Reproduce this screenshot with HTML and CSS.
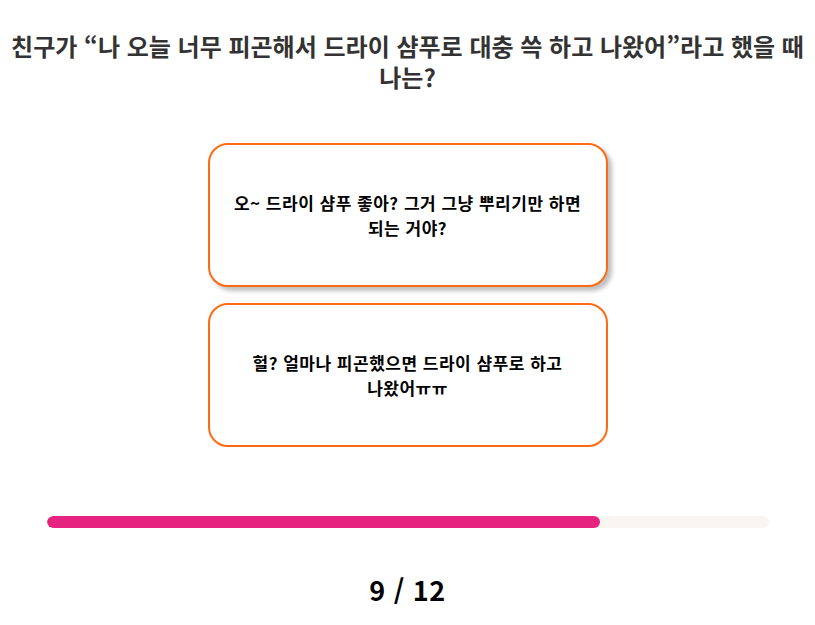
FILE: index.html
```html
<!DOCTYPE html>
<html lang="ko">
<head>
    <meta charset="UTF-8">
    <meta name="viewport" content="width=device-width, initial-scale=1.0">
    <title>Quiz</title>
    <link rel="stylesheet" href="styles.css">
</head>
<body>
    <div class="quiz">
        <h1 class="question">친구가 “나 오늘 너무 피곤해서 드라이 샴푸로 대충 쓱 하고 나왔어”라고 했을 때 나는?</h1>

        <div class="answers">
            <button class="answer hovered">오~ 드라이 샴푸 좋아? 그거 그냥 뿌리기만 하면 되는 거야?</button>
            <button class="answer">헐? 얼마나 피곤했으면 드라이 샴푸로 하고 나왔어ㅠㅠ</button>
        </div>

        <div class="progress">
            <div class="progress-fill" style="width: 76.7%;"></div>
        </div>

        <div class="counter">9 / 12</div>
    </div>
</body>
</html>
```

FILE: styles.css
```css
body {
    margin: 0;
    background-color: #ffffff;
    font-family: "Noto Sans CJK KR", "Noto Sans", sans-serif;
    color: #000;
    word-break: keep-all;
}
.quiz {
    display: flex;
    flex-direction: column;
    align-items: center;
    padding: 30px 10px 0;
}
.question {
    margin: 0;
    font-size: 24px;
    line-height: 31px;
    font-weight: 700;
    color: #333;
    text-align: center;
}
.answers {
    display: flex;
    flex-direction: column;
    gap: 16px;
    margin-top: 51px;
}
.answer {
    width: 400px;
    height: 144px;
    padding: 0 20px;
    background-color: #fff;
    border: 2px solid #ff6a13;
    border-radius: 20px;
    font-family: inherit;
    font-size: 17px;
    letter-spacing: 0.5px;
    line-height: 25px;
    font-weight: 700;
    color: #000;
    word-break: keep-all;
    cursor: pointer;
}
.answer.hovered {
    box-shadow: 4px 4px 4px rgba(0, 0, 0, 0.25);
}
.progress {
    width: 722px;
    height: 12px;
    margin-top: 69px;
    background-color: #f9f6f1;
    border-radius: 6px;
    overflow: hidden;
}
.progress-fill {
    height: 100%;
    background-color: #e6247f;
    border-radius: 6px;
}
.counter {
    margin-top: 42px;
    font-size: 27px;
    letter-spacing: 0.5px;
    font-weight: 700;
}
```
